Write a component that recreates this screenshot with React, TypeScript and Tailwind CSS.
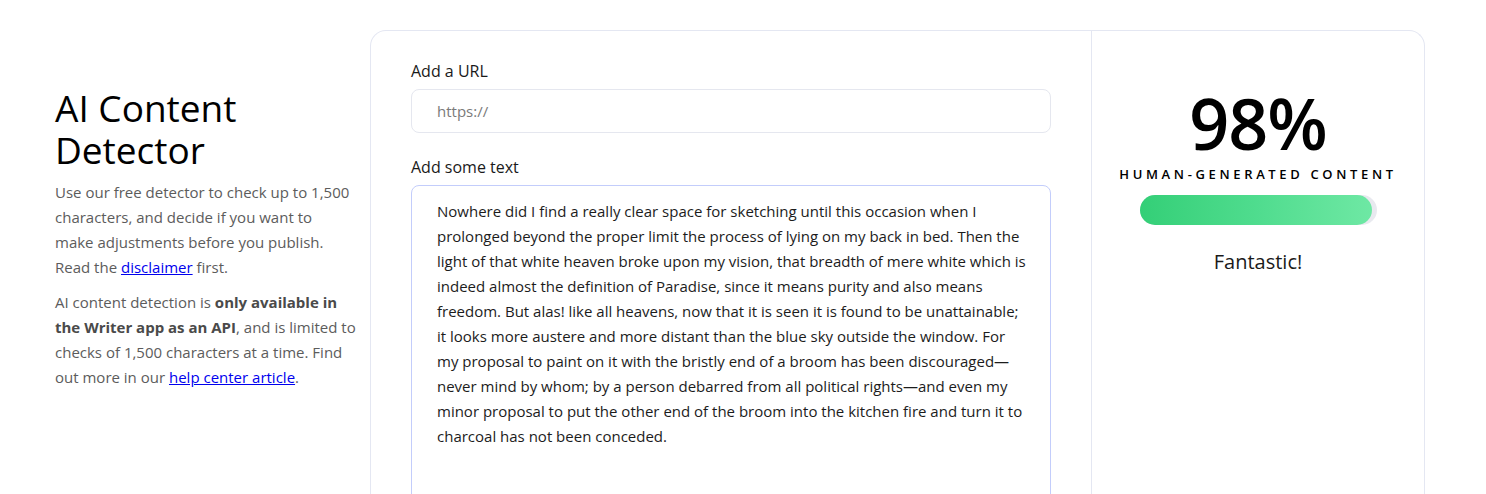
const passage = [
  'Nowhere did I find a really clear space for sketching until this occasion when I',
  'prolonged beyond the proper limit the process of lying on my back in bed. Then the',
  'light of that white heaven broke upon my vision, that breadth of mere white which is',
  'indeed almost the definition of Paradise, since it means purity and also means',
  'freedom. But alas! like all heavens, now that it is seen it is found to be unattainable;',
  'it looks more austere and more distant than the blue sky outside the window. For',
  'my proposal to paint on it with the bristly end of a broom has been discouraged—',
  'never mind by whom; by a person debarred from all political rights—and even my',
  'minor proposal to put the other end of the broom into the kitchen fire and turn it to',
  'charcoal has not been conceded.',
]

const score = 98

export default function App() {
  return (
    <div className="flex w-full h-[494px] overflow-hidden bg-white font-['Open_Sans',sans-serif] text-black">
      <div className="w-[370px] shrink-0 pl-[55px] pr-[10px] pt-[87px]">
        <h1 className="text-[37px] leading-[42px] font-normal">AI Content<br />Detector</h1>
        <p className="mt-[9px] whitespace-nowrap text-[15px] leading-[25px] text-[#5c5c5c]">
          Use our free detector to check up to 1,500<br />
          characters, and decide if you want to<br />
          make adjustments before you publish.<br />
          Read the <a href="#" className="text-[#0000ee] underline">disclaimer</a> first.
        </p>
        <p className="mt-[10px] whitespace-nowrap text-[15px] leading-[25px] text-[#5c5c5c]">
          AI content detection is <b className="font-bold text-[#4a4a4a]">only available in</b><br />
          <b className="font-bold text-[#4a4a4a]">the Writer app as an API</b>, and is limited to<br />
          checks of 1,500 characters at a time. Find<br />
          out more in our <a href="#" className="text-[#0000ee] underline">help center article</a>.
        </p>
      </div>

      <div className="mt-[30px] flex w-[1055px] shrink-0 rounded-t-[16px] border border-b-0 border-[#e4e7f2]">
        <div className="w-[721px] shrink-0 border-r border-[#e4e7f2] px-[40px] pt-[28px]">
          <label className="block text-[16px] leading-[24px] font-medium text-[#1a1a1a]">Add a URL</label>
          <div className="mt-[6px] flex h-[44px] items-center rounded-[8px] border border-[#e5e7ef] px-[25px] text-[15px] text-[#7a7a7a]">
            https://
          </div>
          <label className="mt-[22px] block text-[16px] leading-[24px] font-medium text-[#1a1a1a]">Add some text</label>
          <div className="mt-[6px] h-[330px] rounded-t-[8px] border border-[#c3cdfb] px-[25px] pt-[13px] text-[15px] leading-[25px] text-[#1c1c1c]">
            {passage.map((line) => (
              <div key={line} className="whitespace-nowrap">{line}</div>
            ))}
          </div>
        </div>

        <div className="flex flex-1 flex-col items-center pt-[52px]">
          <div className="text-[70px] leading-[80px] font-semibold tracking-[-1px]">{score}%</div>
          <div className="mt-[2px] text-[13px] font-semibold tracking-[0.28em] text-black">HUMAN-GENERATED CONTENT</div>
          <div className="mt-[10px] h-[30px] w-[237px] rounded-full bg-[#e8e9ef]">
            <div
              className="h-full rounded-full bg-gradient-to-r from-[#33cf77] via-[#4fdc8e] to-[#6ee8a4]"
              style={{ width: `${score}%` }}
            />
          </div>
          <div className="mt-[22px] text-[20px] text-[#1a1a1a]">Fantastic!</div>
        </div>
      </div>
    </div>
  )
}
